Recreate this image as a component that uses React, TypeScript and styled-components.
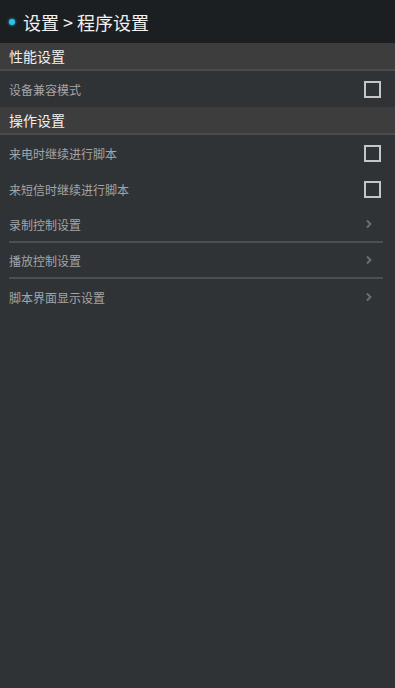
import styled, { createGlobalStyle } from "styled-components";

const GlobalStyle = createGlobalStyle`
  html, body {
    margin: 0;
    padding: 0;
    background: #2f3336;
  }
  body {
    font-family: "Noto Sans CJK SC", "Noto Sans", sans-serif;
  }
`;

const Screen = styled.div`
  width: 395px;
  min-height: 688px;
  background: #2f3336;
  display: flex;
  flex-direction: column;
`;

const TitleBar = styled.div`
  height: 43px;
  background: #1b1f22;
  display: flex;
  align-items: center;
  padding-left: 9px;
  gap: 8px;
  box-sizing: border-box;
`;

const Dot = styled.span`
  width: 6px;
  height: 6px;
  border-radius: 50%;
  background: #2bc4e8;
  box-shadow: 0 0 3px #2bc4e8;
`;

const Title = styled.div`
  color: #f2f2f2;
  font-size: 18px;
  line-height: 1;
`;

const SectionHeader = styled.div`
  height: 26px;
  background: #3d3d3d;
  border-bottom: 2px solid #4a4a4a;
  display: flex;
  align-items: center;
  padding-left: 9px;
  color: #f0f0f0;
  font-size: 14px;
`;

const Row = styled.div<{ $divider?: boolean }>`
  height: ${(p) => (p.$divider ? "34px" : "36px")};
  margin: 0 12px 0 9px;
  display: flex;
  align-items: center;
  justify-content: space-between;
  border-bottom: ${(p) => (p.$divider ? "2px solid #4c5053" : "none")};
`;

const Label = styled.span`
  color: #a3a5a7;
  font-size: 12px;
`;

const Checkbox = styled.span`
  width: 13px;
  height: 13px;
  border: 2px solid #c4c6c8;
  margin-right: 2px;
`;

const Chevron = () => (
  <svg width="8" height="10" viewBox="0 0 8 10" style={{ marginRight: 10 }}>
    <path d="M2 1.5 L5.5 5 L2 8.5" fill="none" stroke="#6e7174" strokeWidth="1.8" />
  </svg>
);

export default function App() {
  return (
    <Screen>
      <GlobalStyle />
      <TitleBar>
        <Dot />
        <Title>设置 &gt; 程序设置</Title>
      </TitleBar>
      <SectionHeader>性能设置</SectionHeader>
      <Row>
        <Label>设备兼容模式</Label>
        <Checkbox />
      </Row>
      <SectionHeader>操作设置</SectionHeader>
      <Row>
        <Label>来电时继续进行脚本</Label>
        <Checkbox />
      </Row>
      <Row>
        <Label>来短信时继续进行脚本</Label>
        <Checkbox />
      </Row>
      <Row $divider>
        <Label>录制控制设置</Label>
        <Chevron />
      </Row>
      <Row $divider>
        <Label>播放控制设置</Label>
        <Chevron />
      </Row>
      <Row>
        <Label>脚本界面显示设置</Label>
        <Chevron />
      </Row>
    </Screen>
  );
}
